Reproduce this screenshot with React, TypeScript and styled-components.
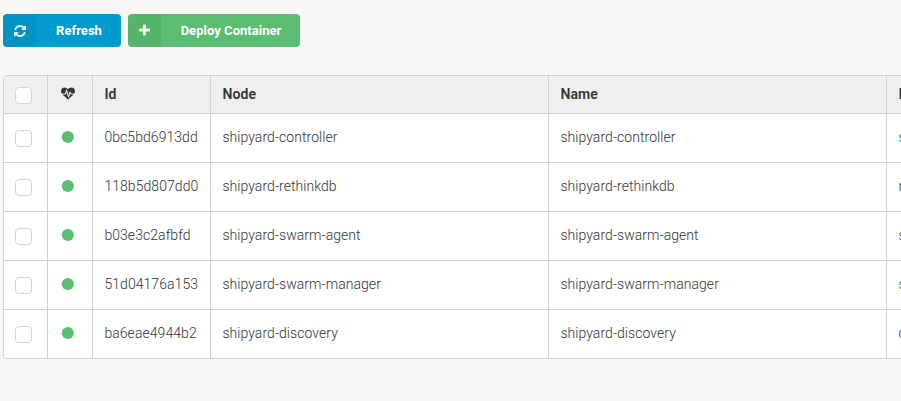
import React from 'react';
import styled, { createGlobalStyle } from 'styled-components';

const GlobalStyle = createGlobalStyle`
  *, *::before, *::after { box-sizing: border-box; }
  html, body { margin: 0; height: 100%; overflow: hidden; background: #f7f7f7; }
  body { font-family: Roboto, "Liberation Sans", sans-serif; font-size: 14px; }
`;

const Page = styled.main`
  padding: 14px 0 0 3px;
  overflow: hidden;
`;

const Toolbar = styled.div`
  display: flex;
  gap: 7px;
  margin-bottom: 28px;
`;

const Button = styled.button<{ $color: string; $width: number }>`
  display: flex;
  width: ${(p) => p.$width}px;
  height: 33px;
  padding: 0;
  border: 0;
  border-radius: 4px;
  overflow: hidden;
  background: ${(p) => p.$color};
  color: #fff;
  font: 700 13px/33px Roboto, "Liberation Sans", sans-serif;
  letter-spacing: 0.03px;
`;

const ButtonIcon = styled.span`
  display: flex;
  flex: 0 0 33px;
  height: 33px;
  align-items: center;
  justify-content: center;
  background: rgba(0, 0, 0, 0.05);
  color: rgba(255, 255, 255, 0.88);
`;

const ButtonLabel = styled.span`
  flex: 1;
  padding-left: 1px;
  text-align: center;
`;

const Glyph = styled.svg<{ $size: number }>`
  display: block;
  width: ${(p) => p.$size}px;
  height: ${(p) => p.$size}px;
  fill: currentColor;
`;

const TableFrame = styled.div`
  width: 1260px;
  border: 1px solid #d0d0d0;
  border-radius: 4px;
  overflow: hidden;
  background: #fff;
`;

const Row = styled.div<{ $header?: boolean }>`
  display: grid;
  grid-template-columns: 44px 45px 118px 338px 338px 1fr;
  height: ${(p) => (p.$header ? 37 : 49)}px;
  border-top: ${(p) => (p.$header ? '0' : '1px solid #d0d0d0')};
  background: ${(p) => (p.$header ? '#efefef' : '#fff')};
  color: #333;
  font-weight: ${(p) => (p.$header ? 600 : 300)};
  letter-spacing: ${(p) => (p.$header ? 0.1 : 0.06)}px;
  line-height: ${(p) => (p.$header ? 36 : 46)}px;
`;

const Cell = styled.div`
  padding-left: 11.4px;
  border-right: 1px solid #d0d0d0;
  white-space: nowrap;
  overflow: hidden;

  &:last-child { border-right: 0; }
`;

const CheckCell = styled(Cell)<{ $top: number }>`
  padding: ${(p) => p.$top}px 0 0 11px;
`;

const Checkbox = styled.input.attrs({ type: 'checkbox' })`
  appearance: none;
  display: block;
  width: 17px;
  height: 17px;
  margin: 0;
  border: 1px solid #d4d4d5;
  border-radius: 4px;
  background: #fff;
`;

const StatusCell = styled(Cell)<{ $top: number }>`
  padding: ${(p) => p.$top}px 0 0 13px;
`;

const REFRESH =
  'M1511 928q0 5-1 7-64 268-268 434.5t-478 166.5q-146 0-282.5-55t-243.5-157l-129 129q-19 19-45 19t-45-19-19-45v-448q0-26 19-45t45-19h448q26 0 45 19t19 45-19 45l-137 137q71 66 161 102t187 36q134 0 250-65t186-179q11-17 53-117 8-23 30-23h192q13 0 22.5 9.5t9.5 22.5zm25-800v448q0 26-19 45t-45 19h-448q-26 0-45-19t-19-45 19-45l138-138q-148-137-349-137-134 0-250 65t-186 179q-11 17-53 117-8 23-30 23h-199q-13 0-22.5-9.5t-9.5-22.5v-7q65-268 270-434.5t480-166.5q146 0 284 55.5t245 156.5l130-129q19-19 45-19t45 19 19 45z';
const PLUS =
  'M1600 736v192q0 40-28 68t-68 28h-416v416q0 40-28 68t-68 28h-192q-40 0-68-28t-28-68v-416h-416q-40 0-68-28t-28-68v-192q0-40 28-68t68-28h416v-416q0-40 28-68t68-28h192q40 0 68 28t28 68v416h416q40 0 68 28t28 68z';
const HEARTBEAT =
  'M1280 896h305q-5 6-10 10.5t-9 7.5l-3 4-623 600q-18 18-44 18t-44-18l-624-602q-5-2-21-20h369q22 0 39.5-13.5t22.5-34.5l70-281 190 667q6 20 23 33t39 13q21 0 38-13t23-33l146-485 56 112q18 35 57 35zm512-428q0 145-103 300h-369l-111-221q-8-17-25.5-27t-36.5-8q-45 5-56 46l-129 430-196-686q-6-20-23.5-33t-39.5-13-39 13.5-22 34.5l-116 464h-423q-103-155-103-300 0-220 127-344t351-124q62 0 126.5 21.5t120 58 95.5 68.5 76 68q36-36 76-68t95.5-68.5 120-58 126.5-21.5q224 0 351 124t127 344z';

const containers = [
  { id: '0bc5bd6913dd', name: 'shipyard-controller', image: 'shipyard/shipyard:latest' },
  { id: '118b5d807dd0', name: 'shipyard-rethinkdb', image: 'rethinkdb' },
  { id: 'b03e3c2afbfd', name: 'shipyard-swarm-agent', image: 'swarm:latest' },
  { id: '51d04176a153', name: 'shipyard-swarm-manager', image: 'swarm:latest' },
  { id: 'ba6eae4944b2', name: 'shipyard-discovery', image: 'consul' },
];

export default function App() {
  return (
    <>
      <GlobalStyle />
      <Page>
        <Toolbar>
          <Button $color="#009ace" $width={118}>
            <ButtonIcon>
              <Glyph $size={12} viewBox="0 0 1536 1536"><path d={REFRESH} /></Glyph>
            </ButtonIcon>
            <ButtonLabel>Refresh</ButtonLabel>
          </Button>
          <Button $color="#5bbd72" $width={172}>
            <ButtonIcon>
              <Glyph $size={14} viewBox="64 64 1792 1792"><path d={PLUS} /></Glyph>
            </ButtonIcon>
            <ButtonLabel>Deploy Container</ButtonLabel>
          </Button>
        </Toolbar>
        <TableFrame>
          <Row $header>
            <CheckCell $top={11}><Checkbox aria-label="Select all" /></CheckCell>
            <StatusCell $top={11}>
              <Glyph $size={14} viewBox="0 -64 1792 1792"><path d={HEARTBEAT} /></Glyph>
            </StatusCell>
            <Cell>Id</Cell>
            <Cell>Node</Cell>
            <Cell>Name</Cell>
            <Cell>Image</Cell>
          </Row>
          {containers.map((c) => (
            <Row key={c.id}>
              <CheckCell $top={16}><Checkbox aria-label={c.name} /></CheckCell>
              <StatusCell $top={16}>
                <Glyph $size={14} viewBox="0 0 14 14">
                  <circle cx="6.8" cy="7" r="6.1" fill="#5bbd72" />
                </Glyph>
              </StatusCell>
              <Cell>{c.id}</Cell>
              <Cell>{c.name}</Cell>
              <Cell>{c.name}</Cell>
              <Cell>{c.image}</Cell>
            </Row>
          ))}
        </TableFrame>
      </Page>
    </>
  );
}
